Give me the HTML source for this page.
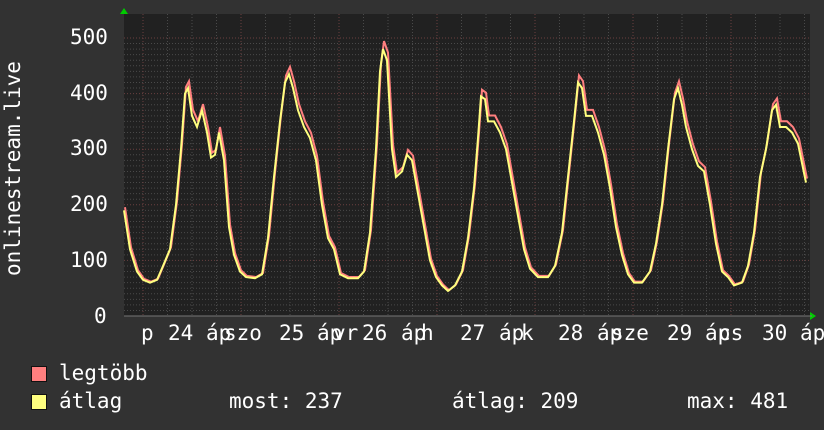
<!DOCTYPE html>
<html><head><meta charset="utf-8"><style>
body{margin:0;background:#323232;width:824px;height:430px;overflow:hidden;position:relative;font-family:"DejaVu Sans Mono","Liberation Mono",monospace;color:#fff}
.t{position:absolute;font-size:21px;white-space:pre;line-height:1}
.sq{position:absolute;width:14px;height:14px;border:1px solid #111}
</style></head><body>
<svg width="824" height="430" style="position:absolute;left:0;top:0">
<rect x="124" y="14" width="686" height="302" fill="#212121"/>
<g id="g"></g>
<polygon points="120,14 128,14 124,8" fill="#00cc00"/>
<polygon points="810,312 810,320 816,316" fill="#00cc00"/>
<line x1="124" y1="316" x2="812" y2="316" stroke="#777" stroke-width="1"/>
</svg>
<div class="t" style="left:3px;top:276px;font-size:21px;transform:rotate(-90deg);transform-origin:0 0;">onlinestream.live</div>
<div class="t" style="left:70px;top:27px">500</div>
<div class="t" style="left:70px;top:83px">400</div>
<div class="t" style="left:70px;top:138px">300</div>
<div class="t" style="left:70px;top:194px">200</div>
<div class="t" style="left:70px;top:250px">100</div>
<div class="t" style="left:94px;top:306px">0</div>
<div class="t" style="left:141px;top:323px">p</div>
<div class="t" style="left:168px;top:323px">24</div>
<div class="t" style="left:206px;top:323px">áp</div>
<div class="t" style="left:224px;top:323px">szo</div>
<div class="t" style="left:279px;top:323px">25</div>
<div class="t" style="left:317px;top:323px">áp</div>
<div class="t" style="left:333px;top:323px">vr</div>
<div class="t" style="left:362px;top:323px">26</div>
<div class="t" style="left:401px;top:323px">áp</div>
<div class="t" style="left:421px;top:323px">h</div>
<div class="t" style="left:460px;top:323px">27</div>
<div class="t" style="left:499px;top:323px">áp</div>
<div class="t" style="left:521px;top:323px">k</div>
<div class="t" style="left:558px;top:323px">28</div>
<div class="t" style="left:597px;top:323px">áp</div>
<div class="t" style="left:611px;top:323px">sze</div>
<div class="t" style="left:667px;top:323px">29</div>
<div class="t" style="left:705px;top:323px">áp</div>
<div class="t" style="left:718px;top:323px">cs</div>
<div class="t" style="left:762px;top:323px">30</div>
<div class="t" style="left:800px;top:323px">áp</div>
<div class="sq" style="left:31px;top:366px;background:#ff7f7f"></div>
<div class="sq" style="left:31px;top:394px;background:#ffff7f"></div>
<div class="t" style="left:59px;top:363px">legtöbb</div>
<div class="t" style="left:59px;top:391px">átlag</div>
<div class="t" style="left:229px;top:391px">most: 237</div>
<div class="t" style="left:452px;top:391px">átlag: 209</div>
<div class="t" style="left:687px;top:391px">max: 481</div>
<script>
var g=document.getElementById('g'),s='';
for(var v=10;v<=500;v+=10){var y=316-v*0.556;s+='<line x1="124" x2="810" y1="'+y+'" y2="'+y+'" stroke="'+(v%100?'#4a4a4a':'#6a4040')+'" stroke-dasharray="1,2"/>';}
for(var x=143;x<=810;x+=24.5){var red=Math.abs(((x-143)/98)-Math.round((x-143)/98))<0.01;s+='<line y1="14" y2="316" x1="'+x+'" x2="'+x+'" stroke="'+(red?'#6a4040':'#4a4a4a')+'" stroke-dasharray="1,2"/>';}
var d=[124,190,130,120,137,80,143,65,150,60,157,65,163,90,170,120,176,200,181,300,185,400,188,410,192,360,197,340,202,370,207,330,211,285,215,290,219,330,224,280,229,160,234,110,240,80,246,70,255,68,262,75,268,140,274,250,280,350,285,420,289,435,293,410,298,370,304,340,310,320,316,280,322,200,328,140,334,120,340,75,348,68,358,68,364,80,370,150,376,300,380,440,383,480,387,460,392,300,396,250,402,260,407,290,412,280,417,230,423,170,430,100,436,70,442,55,448,45,455,55,462,80,468,140,474,230,478,320,481,395,485,390,488,350,494,350,500,330,506,300,512,240,518,180,524,120,530,85,538,70,548,70,555,90,562,150,568,250,574,350,578,420,582,410,586,360,592,360,598,330,604,290,610,230,616,160,622,110,628,75,634,60,642,60,650,80,656,130,662,200,668,300,674,390,678,410,682,380,686,340,692,300,698,270,704,260,710,200,716,130,722,80,728,70,734,55,742,60,748,90,754,150,760,250,766,300,772,370,776,380,780,340,786,340,792,330,798,310,806,240];
function pts(k,dx){var p='';for(var i=0;i<d.length;i+=2)p+=(d[i]+dx)+','+(316-d[i+1]*k*0.556)+' ';return p;}
s+='<polyline points="'+pts(1.03,1)+'" fill="none" stroke="#ff7f7f" stroke-width="2"/>';
s+='<polyline points="'+pts(1,0)+'" fill="none" stroke="#ffff7f" stroke-width="2"/>';
g.innerHTML=s;
</script>
</body></html>
